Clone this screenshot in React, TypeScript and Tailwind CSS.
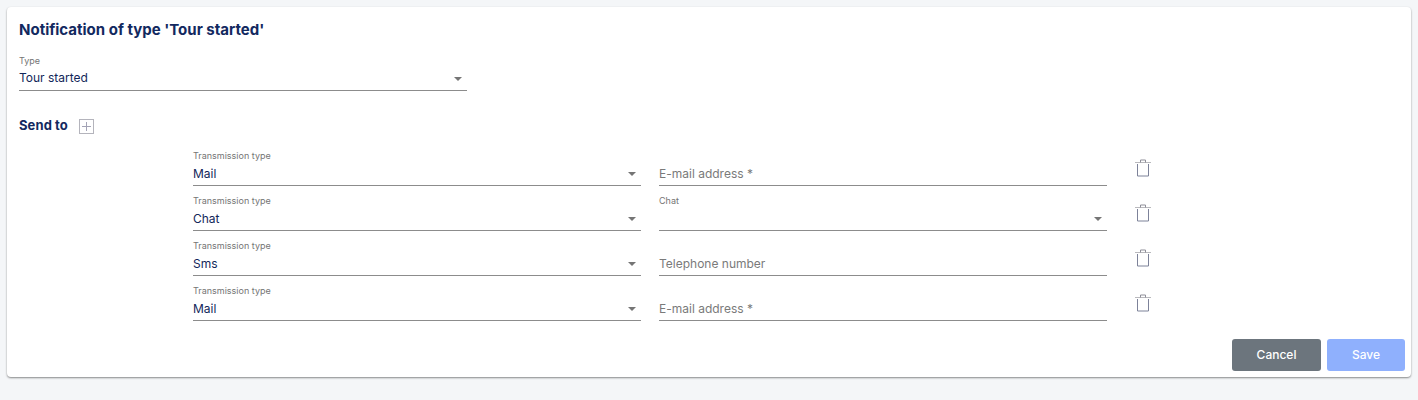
const Arrow = () => (
  <span className="absolute right-[5px] bottom-[9px] w-0 h-0 border-l-[4px] border-r-[4px] border-t-[4px] border-l-transparent border-r-transparent border-t-[#757575]" />
);

const Select = ({ label, value, className, valueClass = "-mt-[2px]" }: { label: string; value: string; className: string; valueClass?: string }) => (
  <div className={`relative h-[40px] border-b border-[#8c8c8c] ${className}`}>
    <div className="text-[9px] leading-[12px] pt-[4px] text-[#757575] h-[16px] box-content">{label}</div>
    <div className={`text-[12px] leading-[20px] text-[#12275a] ${valueClass}`}>{value}</div>
    <Arrow />
  </div>
);

const Input = ({ placeholder }: { placeholder: string }) => (
  <div className="w-[448px] h-[40px] border-b border-[#8c8c8c] flex items-end">
    <div className="text-[12px] leading-[20px] pb-[1px] text-[#7a7a7a]">{placeholder}</div>
  </div>
);

const Trash = () => (
  <svg width="18" height="18" viewBox="0 0 18 18" fill="none" className="ml-[27px] mb-[9px] self-end">
    <path d="M1 3.5H17" stroke="#b9b9bd" strokeWidth="1" />
    <path d="M6.5 3.5V1H11.5V3.5" stroke="#8f8f99" strokeWidth="1" />
    <path d="M3.5 5V17H14.5V5" stroke="#7d8299" strokeWidth="1" />
  </svg>
);

const rows: { type: string; kind: "input" | "select"; text: string }[] = [
  { type: "Mail", kind: "input", text: "E-mail address *" },
  { type: "Chat", kind: "select", text: "Chat" },
  { type: "Sms", kind: "input", text: "Telephone number" },
  { type: "Mail", kind: "input", text: "E-mail address *" },
];

export default function App() {
  return (
    <div className="w-[1418px] h-[400px] bg-[#f4f6f8] pt-[7px] pl-[7px] overflow-hidden" style={{ fontFamily: "Inter, 'Liberation Sans', sans-serif" }}>
      <div className="w-[1404px] h-[370px] bg-white rounded-[4px] shadow-[0_1px_2px_rgba(0,0,0,0.45)] pl-[12px] pt-[12px] flex flex-col">
        <h1 className="text-[15px] leading-[22px] font-bold text-[#12295f]">Notification of type 'Tour started'</h1>
        <Select label="Type" value="Tour started" className="w-[448px] mt-[10px]" valueClass="-mt-[3px]" />
        <div className="flex items-start mt-[24px] h-[20px]">
          <span className="text-[13px] font-bold text-[#12295f] leading-[20px] tracking-[0.1px]">Send to</span>
          <span className="ml-[11px] mt-[4px] w-[15px] h-[15px] border border-[#b4b4bc] flex items-center justify-center">
            <svg width="9" height="9" viewBox="0 0 9 9"><path d="M4.5 0V9M0 4.5H9" stroke="#a3a3b5" strokeWidth="1" /></svg>
          </span>
        </div>
        <div className="flex flex-col gap-[5px] ml-[174px] mt-[11px]">
          {rows.map((r, i) => (
            <div key={i} className="flex">
              <Select label="Transmission type" value={r.type} className="w-[448px]" />
              <div className="w-[18px]" />
              {r.kind === "input" ? <Input placeholder={r.text} /> : <Select label={r.text} value="" className="w-[448px]" />}
              <Trash />
            </div>
          ))}
        </div>
        <div className="flex justify-end gap-[6px] pr-[6px] mt-[18px]">
          <button className="w-[89px] h-[32px] rounded-[3px] bg-[#6c757d] text-white text-[12px] font-medium">Cancel</button>
          <button className="w-[78px] h-[32px] rounded-[3px] bg-[#8fb0fd] text-white text-[12px] font-medium">Save</button>
        </div>
      </div>
    </div>
  );
}
